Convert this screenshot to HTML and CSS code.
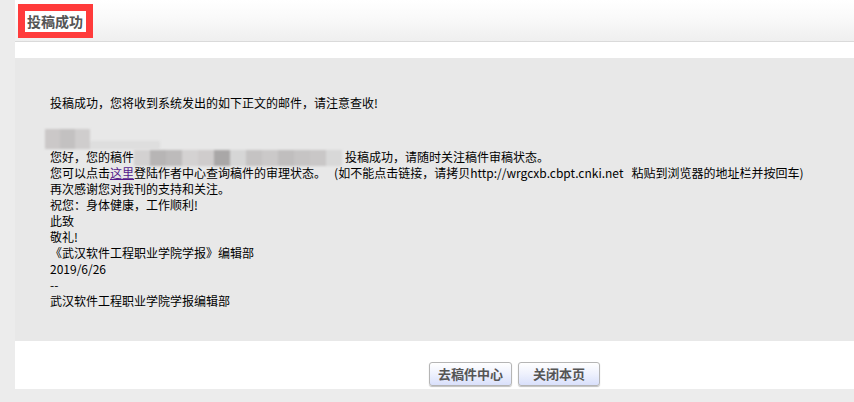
FILE: index.html
```html
<!DOCTYPE html>
<html lang="zh-CN">
<head>
<meta charset="utf-8">
<title>投稿成功</title>
<link rel="stylesheet" href="styles.css">
</head>
<body>
<div class="page">
  <div class="head"><span class="title">投稿成功</span></div>
  <div class="gap"></div>
  <div class="box">
    <p class="lead">投稿成功，您将收到系统发出的如下正文的邮件，请注意查收!</p>
    <div class="name"><span class="m m1"></span><span class="m m2"></span><span class="m m3"></span><span class="m m4"></span></div>
    <div class="mail">
      <div>您好，您的稿件<span class="blurline"><span class="b b1"></span><span class="b b2"></span><span class="b b3"></span><span class="b b4"></span><span class="b b5"></span><span class="b b6"></span><span class="b b7"></span><span class="b b8"></span><span class="b b9"></span><span class="b b10"></span><span class="b b11"></span><span class="b b12"></span><span class="b b13"></span></span>投稿成功，请随时关注稿件审稿状态。</div>
      <div>您可以点击<a href="#" class="link">这里</a>登陆作者中心查询稿件的审理状态。&nbsp;&nbsp;&nbsp;(如不能点击链接，请拷贝http://wrgcxb.cbpt.cnki.net&nbsp;&nbsp; 粘贴到浏览器的地址栏并按回车)</div>
      <div>再次感谢您对我刊的支持和关注。</div>
      <div>祝您：身体健康，工作顺利!</div>
      <div>此致</div>
      <div>敬礼!</div>
      <div>《武汉软件工程职业学院学报》编辑部</div>
      <div>2019/6/26</div>
      <div>--</div>
      <div>武汉软件工程职业学院学报编辑部</div>
    </div>
  </div>
  <div class="actions">
    <button class="btn">去稿件中心</button>
    <button class="btn wide">关闭本页</button>
  </div>
</div>
</body>
</html>
```
FILE: styles.css
```css
html, body {
  margin: 0;
  padding: 0;
}
body {
  background: #ececec;
  font-family: "Noto Sans CJK SC", "Noto Sans", sans-serif;
  font-size: 12px;
  color: #000;
}
.page {
  margin-left: 15px;
  background: #fff;
}
.head {
  height: 42px;
  box-sizing: border-box;
  padding: 4px 0 0 3px;
  background: linear-gradient(#ffffff 0%, #fafafa 40%, #efefef 100%);
  border-bottom: 1px solid #dadada;
}
.title {
  display: inline-block;
  border-style: solid;
  border-color: #ff3b3b;
  border-width: 7px 7px 6px 7px;
  background: #fff;
  padding: 0 3px 0 2px;
  height: 21px;
  line-height: 21px;
  font-size: 14px;
  font-weight: bold;
  color: #555;
}
.gap {
  height: 16px;
}
.box {
  background: #e8e8e8;
  padding: 37px 20px 32px 35px;
  line-height: 16px;
}
.lead {
  margin: 0 0 18px 0;
}
.name {
  display: flex;
  height: 20px;
  margin-left: -5px;
  filter: blur(1.2px);
}
.m { display: block; }
.m1 { width: 15px; height: 20px; background: #cbc8c8; }
.m2 { width: 15px; height: 20px; background: #c3c1c1; }
.m3 { width: 15px; height: 20px; background: #cfcdcd; }
.m4 { width: 70px; height: 8px; margin-top: 12px; background: #dedede; }
.mail div {
  height: 16px;
  white-space: nowrap;
}
.blurline {
  display: inline-flex;
  vertical-align: -4px;
  height: 16px;
  margin-right: 3px;
  filter: blur(1.3px);
}
.b { display: block; width: 16px; height: 16px; }
.b1 { background: #d3d1d1; }
.b2 { background: #b7b5b5; }
.b3 { background: #bdbbbb; }
.b4 { background: #d4d2d2; }
.b5 { background: #cfcccc; }
.b6 { background: #a9a7a7; }
.b7 { background: #d6d6d6; }
.b8 { background: #c5c3c3; }
.b9 { background: #cbc9c9; }
.b10 { background: #c0bebe; }
.b11 { background: #c6c4c4; }
.b12 { background: #c9c7c7; }
.b13 { background: #d8d8d8; }
.link {
  color: #551a8b;
  text-decoration: underline;
}
.actions {
  height: 48px;
  box-sizing: border-box;
  padding: 21px 0 0 414px;
  display: flex;
  gap: 6px;
}
.btn {
  height: 24px;
  width: 83px;
  padding: 0;
  border: 1px solid #b5b5b5;
  border-radius: 3px;
  background: linear-gradient(#ffffff 0%, #eef1fd 50%, #d9e0fb 100%);
  box-shadow: 0 1px 1px rgba(0,0,0,0.25);
  font-family: "Noto Sans CJK SC", sans-serif;
  font-size: 13px;
  font-weight: bold;
  color: #555;
  line-height: 20px;
}
.btn.wide {
  width: 82px;
}
```
